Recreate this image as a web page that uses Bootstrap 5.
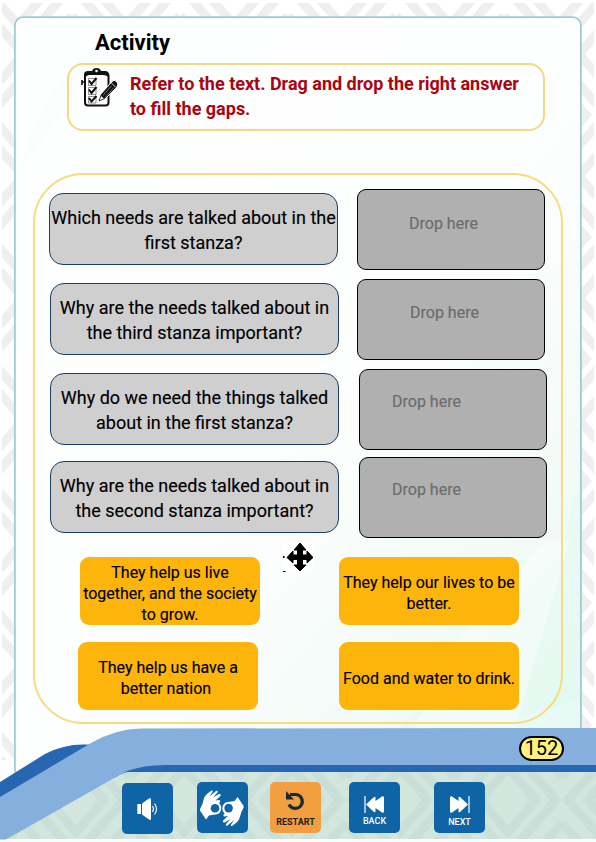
<!DOCTYPE html>
<html lang="en">
<head>
<meta charset="utf-8">
<meta name="viewport" content="width=device-width, initial-scale=1">
<title>Activity</title>
<link rel="stylesheet" href="https://cdn.jsdelivr.net/npm/bootstrap@5.3.0/dist/css/bootstrap.min.css">
<style>
body{font-family:Roboto,"Liberation Sans",sans-serif;color:#000;background:#fff}
.sheet{width:596px;height:842px}
.backdrop{z-index:0}
.content-layer{z-index:1;height:842px}
.page-title{font-size:22px;line-height:26px;margin:30px 0 0 95px;font-weight:700}
.instruction{margin:7px 0 0 67px;width:478px;height:68px;border:2px solid #f4d885;border-radius:16px;padding:2px 0 0 12px}
.instruction p{font-size:18px;line-height:25px;font-weight:700;color:#a90510;margin:4px 0 0 11px;white-space:nowrap}
.board{margin:42px 0 0 33px;width:530px;height:551px;border:2px solid #f8da80;border-radius:50px;padding:14px 0 0 14px}
.match-row{height:81px;margin-bottom:9px}
.match-row.tight{margin-bottom:7px}
.match-row.shift{margin-left:1px}
.question{width:289px;height:72px;border:1px solid #173f68;border-radius:14px;background:#cfcfcf;font-size:18px;line-height:25px;padding-top:2px;white-space:nowrap;-webkit-text-stroke:.15px #000}
.drop-zone{width:188px;height:81px;border:1px solid #000;border-radius:9px;background:#b0b0b0;color:#6b6b6b;font-size:16px;line-height:20px;padding:24px 0 0 51px;margin-left:19px;-webkit-text-stroke:.15px #6b6b6b}
.shift .drop-zone{margin-left:18px;padding-top:23px;padding-left:52px}
.shift.wide .drop-zone{margin-left:20px;padding-left:32px;padding-top:22px}
.answers{margin-top:19px;height:153px;padding-left:29px}
.answer{width:180px;height:68px;border-radius:9px;background:#fdb50b;font-size:16px;line-height:21px;white-space:nowrap;padding-top:4px;-webkit-text-stroke:.15px #000}
.answer.indent{margin-left:2px}
.trail{padding-right:4px}
.answer-left{width:261px}
.mover{left:283px;top:542px;z-index:2}
.page-no{width:45px;height:25px;border:2px solid #000;border-radius:13px;background:#fff27c;font-size:20px;line-height:21px;margin:12px 0 0 519px}
.nav-strip{margin-top:21px;padding-left:122px;width:484px}
.tile{width:51px;height:51px;border:0;border-radius:5px;background:#0f64a6;color:#fff;font-size:9px;line-height:11px;font-weight:500;padding:0}
.tile-labelled{padding-bottom:5px}
.tile-sound{margin-top:1px}
.tile-restart{background:#f29f42;color:#1c1c1c;line-height:12px;font-weight:700}
.gap-a{margin-left:24px}
.gap-b{margin-left:22px}
.gap-c{margin-left:28px}
.gap-d{margin-left:34px}
</style>
<script src="https://cdn.jsdelivr.net/npm/bootstrap@5.3.0/dist/js/bootstrap.bundle.min.js"></script>
</head>
<body class="m-0 overflow-hidden">
<main class="sheet position-relative overflow-hidden">
<svg class="backdrop position-absolute top-0 start-0" width="596" height="842" viewBox="0 0 596 842" aria-hidden="true">
<defs>
<pattern id="weave" x="-36" y="-68" width="108" height="122" patternUnits="userSpaceOnUse">
<g fill="none" stroke="#efefef" stroke-width="9"><path d="M54 6L102 61L54 116L6 61ZM54 29L82 61L54 93L26 61Z"/><path d="M0 38L33 0M108 38L75 0M0 84L33 122M108 84L75 122M0 15L13 0M108 15L95 0M0 107L13 122M108 107L95 122"/></g>
</pattern>
<pattern id="weaveGreen" x="22" y="739" width="108" height="122" patternUnits="userSpaceOnUse">
<g fill="none" stroke="#cadfd7" stroke-width="9"><path d="M54 6L102 61L54 116L6 61ZM54 29L82 61L54 93L26 61Z"/><path d="M0 38L33 0M108 38L75 0M0 84L33 122M108 84L75 122"/></g>
</pattern>
<linearGradient id="wash" x1="0.1" y1="0" x2="1" y2="1"><stop offset="0" stop-color="#fdfffe"/><stop offset=".25" stop-color="#fefefe"/><stop offset=".5" stop-color="#fdfefe"/><stop offset=".8" stop-color="#f1fbf6"/><stop offset="1" stop-color="#e4faf3"/></linearGradient>
</defs>
<path d="M2 3H594V760H2Z" fill="url(#weave)"/>
<rect x="15" y="17" width="565" height="760" rx="8" fill="url(#wash)"/>
<path d="M563 545L580 480V700L480 728H400L470 650Z" fill="#dcf7ec" opacity=".3"/>
<path d="M450 650L545 540H570L515 728H415Z" fill="#fff" opacity=".4"/>
<path d="M18 170Q70 110 105 40Q50 70 18 170Z" fill="#f5fbf9" opacity=".5"/>
<rect x="14.900" y="17.200" width="566" height="760" rx="8" fill="none" stroke="#a3cbd3" stroke-width="1.800"/>
<path d="M0 842L128 771H596V839H0Z" fill="#d2e6de"/>
<path d="M0 842L128 771H596V839H0Z" fill="url(#weaveGreen)"/>
<path d="M0 782L45 754Q64 744 85 744.500L110 745L190 762L596 763V772H127L0 820Z" fill="#2766b1"/>
<path d="M0 797L91 743Q115 729 141 728.500L596 728V765H165Q144 765 127 771L5 840H0Z" fill="#85afdd"/>
<path d="M0 839.500H596V842H0Z" fill="#f8fcfa"/>
</svg>
<div class="content-layer position-relative d-flex flex-column align-items-start">
<h1 class="page-title">Activity</h1>
<section class="instruction d-flex align-items-start">
<svg width="38" height="41" viewBox="0 0 38 41" aria-hidden="true"><rect x="4" y="6" width="23.500" height="32.500" rx="3" fill="#fff" stroke="#111" stroke-width="2"/><path d="M3 12V8Q3 4 7 4H11Q12 1 15.500 1T20 4H24Q28 4 28 8V11Q26 8 22 8H9Q5 8 3 12Z" fill="#111"/><circle cx="15.500" cy="4" r="1.300" fill="#fff"/><path d="M1 13V18M1 15H4" stroke="#111" stroke-width="1.600"/><g fill="#fff" stroke="#777" stroke-width=".8"><path d="M7.500 11.500H15V18.500H7.500ZM7.500 20.500H15V27.500H7.500ZM7.500 29.500H15V36H7.500Z"/></g><path d="M8 13.500L10.500 17L15.500 11M8 22.500L10.500 26L15.500 20M8 31L10.500 34.500L15.500 29" fill="none" stroke="#111" stroke-width="2"/><path d="M17 35L19.500 27.500L31 14.500Q33 12 35.500 14.500T36 20L24 32Z" fill="#111" stroke="#fff" stroke-width="1"/><path d="M18.200 33.800L20 28.500L23.300 31.800Z" fill="#fff" stroke="#111" stroke-width=".7"/><path d="M22 28.500L30.500 18.800M24 30.500L33 20.500" stroke="#bbb" stroke-width=".6"/><path d="M29.500 15L35 20.500" stroke="#fff" stroke-width=".8"/></svg>
<p>Refer to the text. Drag and drop the right answer<br>to fill the gaps.</p>
</section>
<section class="board">
<div class="match-row d-flex"><div class="question d-flex align-items-center justify-content-center text-center mt-1">Which needs are talked about in the<br>first stanza?</div><div class="drop-zone">Drop here</div></div>
<div class="match-row shift d-flex"><div class="question d-flex align-items-center justify-content-center text-center mt-1">Why are the needs talked about in<br>the third stanza important?</div><div class="drop-zone">Drop here</div></div>
<div class="match-row shift wide tight d-flex"><div class="question d-flex align-items-center justify-content-center text-center mt-1">Why do we need the things talked<br>about in the first stanza?</div><div class="drop-zone">Drop here</div></div>
<div class="match-row shift wide mb-0 d-flex"><div class="question d-flex align-items-center justify-content-center text-center mt-1">Why are the needs talked about in<br>the second stanza important?</div><div class="drop-zone">Drop here</div></div>
<div class="answers d-flex">
<div class="answer-left d-flex flex-column justify-content-between"><div class="answer indent d-flex align-items-center justify-content-center text-center">They help us live<br>together, and the society<br>to grow.</div><div class="answer d-flex align-items-center justify-content-center text-center"><div>They help us have a<br><span class="trail">better nation</span></div></div></div>
<div class="d-flex flex-column justify-content-between"><div class="answer d-flex align-items-center justify-content-center text-center">They help our lives to be<br>better.</div><div class="answer d-flex align-items-center justify-content-center text-center">Food and water to drink.</div></div>
</div>
</section>
<div class="page-no d-flex align-items-center justify-content-center">152</div>
<nav class="nav-strip d-flex">
<button class="tile tile-sound flex-shrink-0" aria-label="Sound"><svg class="d-block" width="51" height="51" viewBox="0 0 51 51"><path d="M16 21H19V31H16Q15.300 31 15.300 30V22Q15.300 21 16 21ZM20 20.500L27 15.500Q29 14 29 17V35Q29 38 27 36.500L20 31.500Z" fill="#fff"/><path d="M30.500 23Q32.500 26 30.500 29M32.500 20.500Q36.500 26 32.500 31.500" fill="none" stroke="#fff" stroke-width="1.100"/></svg></button>
<button class="tile gap-a flex-shrink-0" aria-label="Sign language"><svg class="d-block" width="51" height="51" viewBox="0 0 51 51"><g id="hand"><path d="M3 27Q6 22 6.500 18Q7.500 14 10 12L14.500 8.500Q16.500 8 15.500 10L12.500 14.500L19 9Q21.500 8 20.500 10.500L16 15.500L22 12Q24.500 11.500 23.500 14L18.500 18.500L22 18Q24.500 19 22 21Q25 24 24 28Q23 32 19 32.500Q15 33 12 33.500L9 37.500L3 28.500Z" fill="#fff"/><circle cx="18" cy="26.300" r="4.300" fill="#0f64a6"/></g><use href="#hand" transform="rotate(180 24.800 26.200)"/></svg></button>
<button class="tile tile-labelled tile-restart gap-b flex-shrink-0"><svg class="d-block" width="51" height="34" viewBox="0 0 51 34"><path d="M20 12.500H26.500A7 7 0 1 1 19 22.500" fill="none" stroke="#1c2a30" stroke-width="3.200"/><path d="M16 9V17.500H24Z" fill="#1c2a30"/></svg>RESTART</button>
<button class="tile tile-labelled gap-c flex-shrink-0"><svg class="d-block" width="51" height="33" viewBox="0 0 51 33"><path d="M16 13V30" stroke="#fff" stroke-width="1.200"/><path d="M17 21.500L25 14Q26.500 13 26.500 15V18L33 13.500Q35 12.500 35 15V28Q35 30.500 33 29.500L26.500 25V28Q26.500 30 25 29Z" fill="#fff"/></svg>BACK</button>
<button class="tile tile-labelled gap-d flex-shrink-0"><svg class="d-block" width="51" height="34" viewBox="0 0 51 34"><g transform="translate(51 0) scale(-1 1)"><path d="M16 13V30" stroke="#fff" stroke-width="1.200"/><path d="M17 21.500L25 14Q26.500 13 26.500 15V18L33 13.500Q35 12.500 35 15V28Q35 30.500 33 29.500L26.500 25V28Q26.500 30 25 29Z" fill="#fff"/></g></svg>NEXT</button>
</nav>
</div>
<svg class="mover position-absolute" width="30" height="30" viewBox="0 0 30 30" aria-hidden="true"><path d="M0 0H30V30H0Z" fill="#fff"/><path d="M17 1L23 8H19.500V13H24V9L30 15.500L24 21V17.500H19.500V23H23L17 29L11 23H14.500V17.500H10V21L4 15.500L10 9V13H14.500V8H11Z" fill="#000" stroke="#000" stroke-width="1"/><path d="M0 14H1.500V16H0ZM0 29H2.500V30H0Z"/></svg>
</main>
</body>
</html>
